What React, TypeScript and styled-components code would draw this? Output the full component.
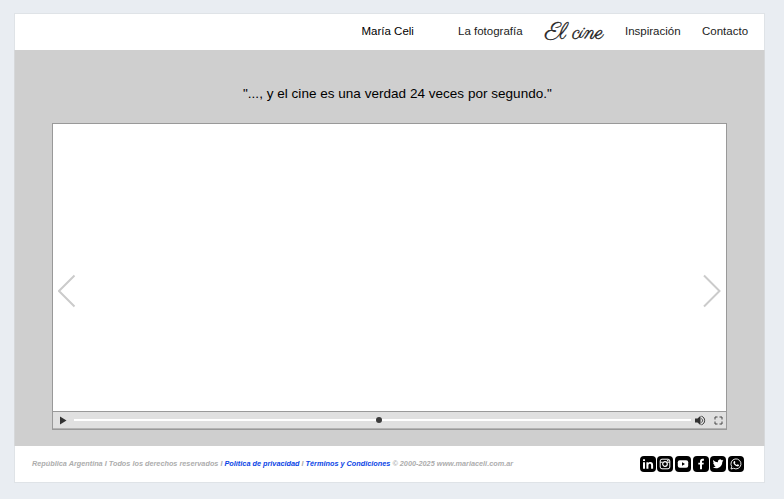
import React from 'react';
import styled, { createGlobalStyle } from 'styled-components';

const GlobalStyle = createGlobalStyle`
  * { box-sizing: border-box; }
  body {
    margin: 0;
    background: #e9edf2;
    font-family: "Liberation Sans", Helvetica, Arial, sans-serif;
    color: #000;
  }
  a { text-decoration: none; }
`;

const Page = styled.div`
  height: 499px;
  padding: 13px 19px 16px 14px;
  overflow: hidden;
`;

const Site = styled.div`
  height: 470px;
  display: flex;
  flex-direction: column;
  background: #fff;
  box-shadow: inset 0 0 0 1px #dfe3e7;
`;

const Header = styled.header`
  height: 37px;
  flex: none;
  padding: 0 0 1px 347.5px;
  display: grid;
  grid-template-columns: 96.5px 87px 80px 77px 60px;
  align-items: center;
  white-space: nowrap;
`;

const NavLink = styled.a<{ $brand?: boolean }>`
  font-size: 11.5px;
  line-height: 14px;
  color: ${p => (p.$brand ? '#000' : '#1c1c1c')};
`;

const ActiveLink = styled.a`
  padding-top: 3px;
  font-family: Parisienne, "Alex Brush", "Liberation Serif", cursive;
  font-size: 22.5px;
  line-height: 24px;
  -webkit-text-stroke: 0.3px #1c1c1c;
  color: #1c1c1c;
`;

const Main = styled.main`
  height: 396px;
  flex: none;
  padding: 0 38px;
  background: #cfcfcf;
  border: solid #d6d8da;
  border-width: 0 1px;
`;

const Quote = styled.h1`
  margin: 0;
  height: 73px;
  padding: 36px 0 0 190px;
  font-size: 13.5px;
  line-height: 16px;
  font-weight: 400;
  letter-spacing: 0.025px;
  white-space: nowrap;
`;

const Player = styled.section`
  width: 675px;
  height: 307px;
  margin-left: -1px;
  display: flex;
  flex-direction: column;
  background: #fff;
  border: 1px solid #999;
`;

const Screen = styled.div`
  flex: 1;
  padding: 46px 5px 0 5px;
  display: flex;
  align-items: center;
  justify-content: space-between;
`;

const Arrow = styled.button`
  padding: 0;
  border: 0;
  background: none;
  display: flex;
`;

const Controls = styled.div`
  height: 18px;
  flex: none;
  display: flex;
  align-items: center;
  padding: 0 3px 0 7px;
  background: #e0e0e0;
  border-top: 1px solid #999;
  border-bottom: 1px solid #b4b4b4;
`;

const Track = styled.div`
  width: 617px;
  height: 2px;
  margin: 0 4px 0 6px;
  background: #fff;
  display: flex;
  align-items: center;
`;

const Thumb = styled.span`
  width: 6px;
  height: 6px;
  flex: none;
  margin-left: 302px;
  border-radius: 50%;
  background: #3c3c3c;
`;

const Fullscreen = styled.span`
  display: flex;
  margin-left: 8px;
`;

const Footer = styled.footer`
  flex: 1;
  display: flex;
  align-items: center;
  justify-content: space-between;
  padding: 0 21px 2px 18px;
`;

const Legal = styled.p`
  margin: 0;
  font-size: 7.3px;
  line-height: 10px;
  font-weight: 700;
  font-style: italic;
  color: #adadad;
  white-space: nowrap;

  a { color: #0a45e6; }
`;

const Social = styled.div`
  display: flex;
  gap: 1.7px;
`;

const Badge = styled.a`
  width: 16px;
  height: 16px;
  border-radius: 4px;
  background: #000;
  color: #fff;
  display: grid;
  place-items: center;
`;

const NETWORKS: { name: string; icon: React.ReactNode }[] = [
  {
    name: 'LinkedIn',
    icon: <path fill="currentColor" d="M3 6.2h2v6.6H3zM3 3.2h2v1.9H3zM6.4 6.2h1.9v.9c.5-.8 1.2-1.1 2.1-1.1 1.8 0 2.7 1.1 2.7 2.9v3.9h-2V9.3c0-1-.4-1.6-1.2-1.6-.9 0-1.5.6-1.5 1.7v3.4h-2z" />,
  },
  {
    name: 'Instagram',
    icon: (
      <g fill="none" stroke="currentColor">
        <rect x="3.2" y="3.2" width="9.6" height="9.6" rx="1.8" />
        <path d="M3.3 6.2h2.5M10.2 6.2h2.5" />
        <circle cx="8" cy="8" r="2.3" strokeWidth="1.2" />
        <path d="M10.1 4.6h1.4" strokeWidth="1.3" />
      </g>
    ),
  },
  {
    name: 'YouTube',
    icon: (
      <>
        <rect x="2.8" y="4.3" width="10.4" height="7.4" rx="2" fill="currentColor" />
        <path d="M7 6.2v3.6L10 8z" fill="#000" />
      </>
    ),
  },
  {
    name: 'Facebook',
    icon: <path fill="currentColor" d="M7 13.3V8.6H5.3V6.7H7V5.4C7 3.7 8 2.8 9.4 2.8h1.5v1.9H9.8c-.6 0-.8.3-.8.9v1.1h1.8l-.3 1.9H9v4.7z" />,
  },
  {
    name: 'Twitter',
    icon: <path fill="currentColor" d="M13.4 4.5c-.4.2-.8.3-1.2.4.4-.3.8-.7.9-1.2-.4.3-.9.4-1.4.5a2.2 2.2 0 0 0-3.8 2C6.1 6.1 4.5 5.3 3.4 3.9c-.6 1-.3 2.2.7 2.9-.4 0-.7-.1-1-.3 0 1.1.7 2 1.7 2.2-.3.1-.7.1-1 0 .3.9 1.1 1.5 2.1 1.5A4.5 4.5 0 0 1 2.7 11.2c4.5 2.8 9.7-.3 9.6-5.5.5-.3.8-.7 1.1-1.2z" />,
  },
  {
    name: 'WhatsApp',
    icon: (
      <>
        <path d="M3 13l.7-2.5a5 5 0 1 1 1.9 1.8z" fill="none" stroke="currentColor" strokeWidth=".9" />
        <path d="M5.9 5.4c.7-.7 1.1-.2 1.5.9l-.6.9c.5.9 1.1 1.4 2 1.8l.8-.8 1.5.8c-.1 1.3-1.3 1.7-2.4 1.3-2-.7-3.5-2.4-3.3-4z" fill="currentColor" />
      </>
    ),
  },
];

export default function App() {
  return (
    <>
      <GlobalStyle />
      <Page>
        <Site>
          <Header>
            <NavLink $brand>María Celi</NavLink>
            <NavLink>La fotografía</NavLink>
            <ActiveLink>El cine</ActiveLink>
            <NavLink>Inspiración</NavLink>
            <NavLink>Contacto</NavLink>
          </Header>
          <Main>
            <Quote>"..., y el cine es una verdad 24 veces por segundo."</Quote>
            <Player>
              <Screen>
                <Arrow aria-label="Anterior">
                  <svg width="18" height="34" fill="none" stroke="#cbcbcb" strokeWidth="2">
                    <path d="M16.5 1.5L1 17L16.5 32.5" />
                  </svg>
                </Arrow>
                <Arrow aria-label="Siguiente">
                  <svg width="18" height="34" fill="none" stroke="#cbcbcb" strokeWidth="2">
                    <path d="M1 1.5L16.5 17L1 32.5" />
                  </svg>
                </Arrow>
              </Screen>
              <Controls>
                <svg width="8" height="9"><path d="M0 .5L6.5 4.5L0 8.5z" fill="#333" /></svg>
                <Track><Thumb /></Track>
                <svg width="11" height="11" fill="none" stroke="#333">
                  <path d="M0 3.5H2.5L5.5 .7V10.3L2.5 7.5H0z" fill="#333" stroke="none" />
                  <path d="M6.4 3.6C8 4.5 8 6.5 6.4 7.4" />
                  <path d="M6.4 1.2C10.7 2.3 10.7 8.7 6.4 9.8" />
                </svg>
                <Fullscreen>
                  <svg width="9" height="9" fill="none" stroke="#444">
                    <path d="M1 3.5V1H3.5M5.5 1H8V3.5M8 5.5V8H5.5M3.5 8H1V5.5" />
                  </svg>
                </Fullscreen>
              </Controls>
            </Player>
          </Main>
          <Footer>
            <Legal>
              República Argentina I Todos los derechos reservados I <a>Política de privacidad</a> I <a>Términos y Condiciones</a> © 2000-2025 www.mariaceli.com.ar
            </Legal>
            <Social>
              {NETWORKS.map(n => (
                <Badge key={n.name} aria-label={n.name}>
                  <svg width="16" height="16" viewBox="0 0 16 16">{n.icon}</svg>
                </Badge>
              ))}
            </Social>
          </Footer>
        </Site>
      </Page>
    </>
  );
}
